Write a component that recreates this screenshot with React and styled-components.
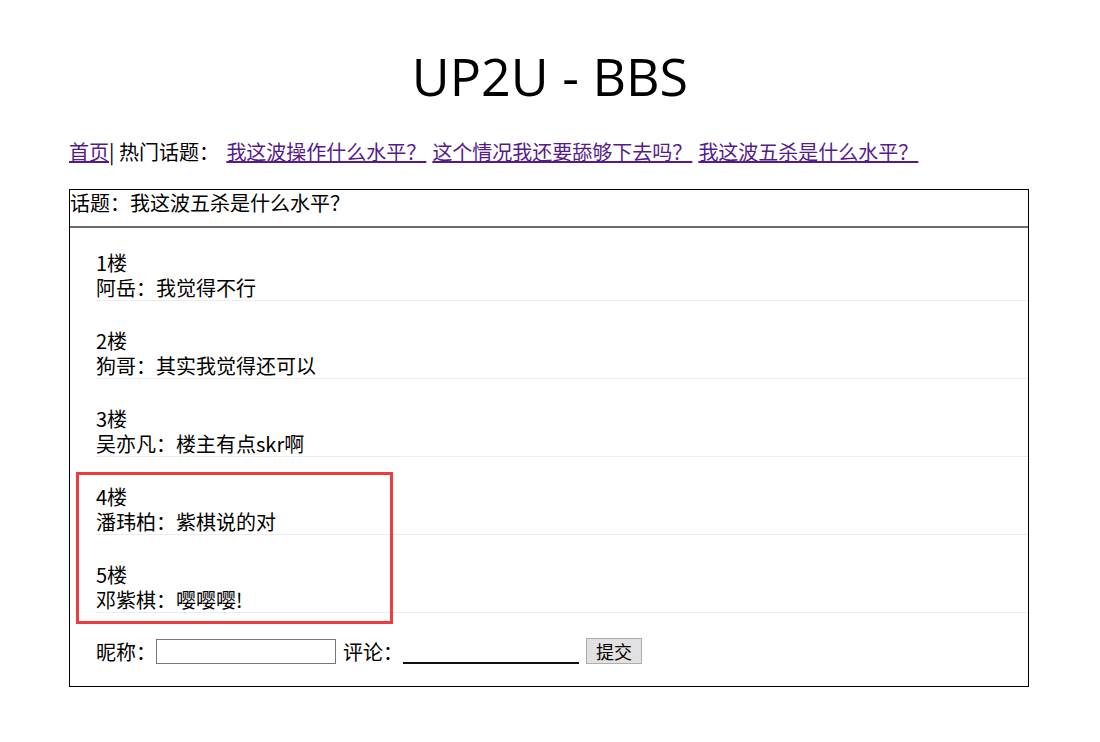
import React from "react"
import styled, { createGlobalStyle } from "styled-components"

const GlobalStyle = createGlobalStyle`
  body {
    margin: 0;
    background: #fff;
    color: #000;
    font-family: "Noto Sans CJK SC", "Noto Sans", sans-serif;
  }
`

const Page = styled.div`
  width: 962px;
  margin: 0 auto;
  padding-top: 40px;
`

const Title = styled.h1`
  margin: 0;
  height: 72px;
  line-height: 72px;
  text-align: center;
  font-family: "Open Sans", "Noto Sans CJK SC", sans-serif;
  font-size: 52px;
  font-weight: normal;
`

const Nav = styled.div`
  margin-top: 27px;
  font-size: 20px;
  line-height: 26px;
  white-space: nowrap;
`

const NavLink = styled.a`
  color: #551a8b;
  text-decoration: underline;
  cursor: pointer;
  margin-left: ${props => props.lead || 0}px;
  margin-right: ${props => (props.gap ? "6px" : "0")};
`

const Board = styled.div`
  position: relative;
  width: 960px;
  box-sizing: border-box;
  margin-top: 24px;
  border: 1px solid #000;
  font-size: 20px;
  line-height: 25px;
`

const Topic = styled.div`
  line-height: 26px;
  padding-bottom: 10px;
  border-bottom: 2px solid #6a6a6a;
`

const Posts = styled.div`
  padding-left: 26px;
`

const Post = styled.div`
  padding-top: 27px;
  border-bottom: 1px solid #ececec;
  &:first-child {
    padding-top: 22px;
  }
`

const Form = styled.div`
  display: flex;
  align-items: center;
  padding: 25px 0 22px 26px;
  height: 26px;
`

const Label = styled.span`
  margin-left: ${props => props.offset || 0}px;
`

const NameInput = styled.input`
  box-sizing: border-box;
  width: 180px;
  height: 25px;
  margin: 0;
  padding: 0 4px;
  border: 1px solid #767676;
  font-size: 16px;
  outline: none;
`

const CommentInput = styled.input`
  box-sizing: border-box;
  width: 176px;
  height: 25px;
  margin: 0;
  padding: 0 4px;
  border: none;
  border-bottom: 2px solid #111;
  font-size: 16px;
  outline: none;
`

const Submit = styled.button`
  box-sizing: border-box;
  height: 26px;
  margin-left: 7px;
  padding: 0 9px;
  border: 1px solid #adadad;
  background: #e1e1e1;
  font-family: "Noto Sans CJK SC", sans-serif;
  font-size: 18px;
  line-height: 22px;
  color: #000;
`

const Highlight = styled.div`
  position: absolute;
  left: 6px;
  top: 282px;
  width: 317px;
  height: 152px;
  box-sizing: border-box;
  border: 3px solid #ef3b3b;
  pointer-events: none;
`

const posts = [
  { floor: "1楼", text: "阿岳：我觉得不行" },
  { floor: "2楼", text: "狗哥：其实我觉得还可以" },
  { floor: "3楼", text: "吴亦凡：楼主有点skr啊" },
  { floor: "4楼", text: "潘玮柏：紫棋说的对" },
  { floor: "5楼", text: "邓紫棋：嘤嘤嘤!" },
]

export default function App() {
  return (
    <Page>
      <GlobalStyle />
      <Title>UP2U - BBS</Title>
      <Nav>
        <NavLink>首页</NavLink>| 热门话题：{" "}
        <NavLink lead={3} gap>我这波操作什么水平？</NavLink>
        <NavLink gap>这个情况我还要舔够下去吗？</NavLink>
        <NavLink>我这波五杀是什么水平？</NavLink>
      </Nav>
      <Board>
        <Topic>话题：我这波五杀是什么水平？</Topic>
        <Posts>
          {posts.map(p => (
            <Post key={p.floor}>
              <div>{p.floor}</div>
              <div>{p.text}</div>
            </Post>
          ))}
        </Posts>
        <Form>
          <Label>昵称：</Label>
          <NameInput />
          <Label offset={7}>评论：</Label>
          <CommentInput />
          <Submit>提交</Submit>
        </Form>
        <Highlight />
      </Board>
    </Page>
  )
}
